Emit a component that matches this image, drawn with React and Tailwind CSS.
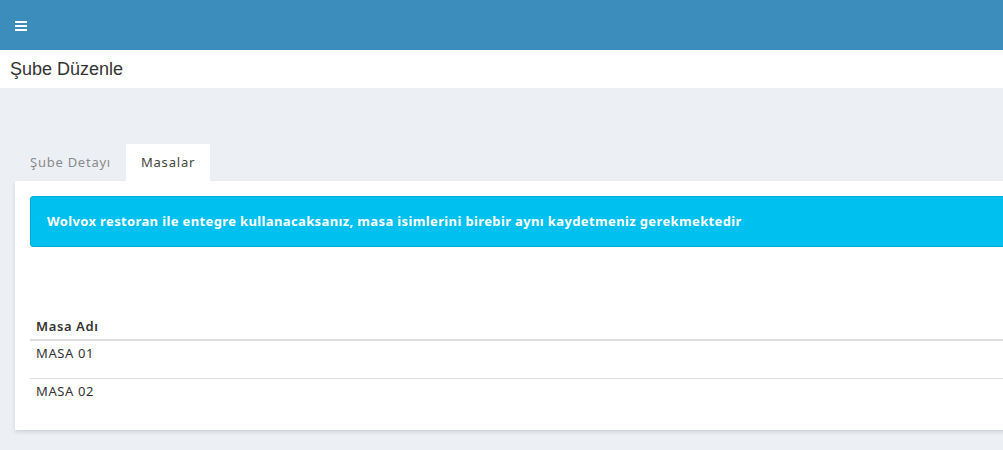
import React from 'react';

const App = () => {
    const rows = ["MASA 01", "MASA 02"];

    return (
        <div className="w-[1003px] h-[450px] overflow-hidden bg-[#ecf0f5]" style={{ fontFamily: '"Liberation Sans", Arial, sans-serif' }}>
            <div className="h-[50px] bg-[#3c8dbc] flex items-center px-[15px]">
                <svg width="12" height="10" viewBox="0 0 12 10" className="mt-[2px]">
                    <rect x="0" y="0" width="12" height="2" fill="#fff" />
                    <rect x="0" y="4" width="12" height="2" fill="#fff" />
                    <rect x="0" y="8" width="12" height="2" fill="#fff" />
                </svg>
            </div>
            <div className="h-[38px] bg-white flex items-center px-[10px]">
                <h1 className="text-[18px] text-[#333]">Şube Düzenle</h1>
            </div>

            <div className="w-[1100px] pl-[15px] pt-[56px]" style={{ fontFamily: '"Noto Sans", "Open Sans", sans-serif' }}>
                <div className="flex h-[37px]">
                    <div className="px-[15px] flex items-center text-[13px] tracking-[0.75px] text-[#8a8a8a]">Şube Detayı</div>
                    <div className="px-[15px] flex items-center text-[13px] tracking-[0.8px] text-[#444] bg-white">Masalar</div>
                </div>
                <div className="bg-white shadow-[0_2px_4px_rgba(0,0,0,0.12)] px-[15px] pt-[15px] pb-[13px]">
                    <div className="h-[51px] bg-[#00c0ef] border border-[#00acd6] rounded-[3px] flex items-center px-[16px]">
                        <p className="text-white font-bold text-[13px] tracking-[0.37px]">
                            Wolvox restoran ile entegre kullanacaksanız, masa isimlerini birebir aynı kaydetmeniz gerekmektedir
                        </p>
                    </div>
                    <table className="w-full mt-[70px] text-[13px] tracking-[0.6px] text-[#333]">
                        <thead>
                            <tr className="border-b-2 border-[#dedede]">
                                <th className="text-left font-semibold px-[6px] pb-[2px]">Masa Adı</th>
                            </tr>
                        </thead>
                        <tbody>
                            {rows.map((r, i) => (
                                <tr key={r} className={i === 0 ? "border-b border-[#dedede]" : ""}>
                                    <td className="px-[6px] pt-[3px] pb-[15px] align-top h-[35px]">{r}</td>
                                </tr>
                            ))}
                        </tbody>
                    </table>
                </div>
            </div>
        </div>
    );
};

export default App;
